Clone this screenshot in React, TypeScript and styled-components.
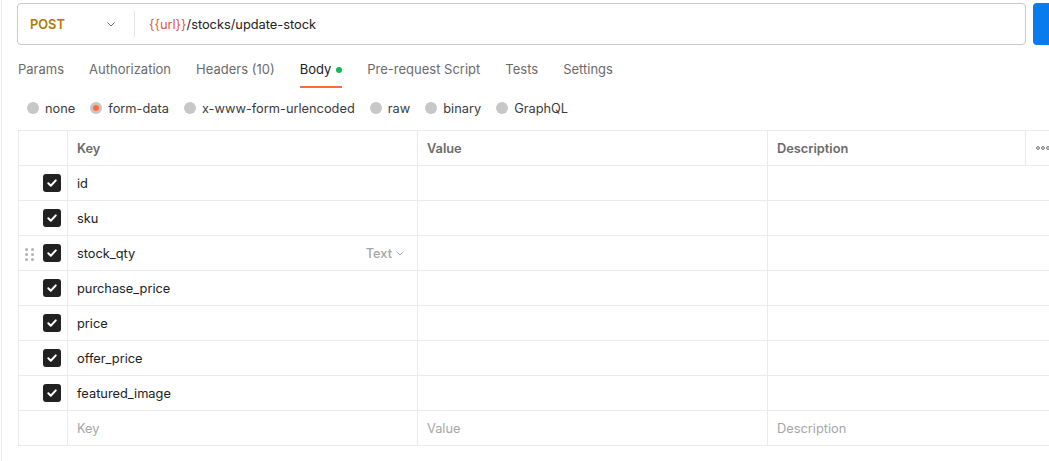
import styled, { createGlobalStyle } from 'styled-components';

const GlobalStyle = createGlobalStyle`
  html, body {
    margin: 0;
    padding: 0;
    background: #fff;
    overflow: hidden;
  }
  body {
    font-family: Inter, "Noto Sans", "Liberation Sans", sans-serif;
    font-size: 12.8px;
    color: #212121;
  }
`;

const Page = styled.div`
  height: 461px;
  margin-left: 1px;
  border-left: 1px solid #ececec;
  padding: 3px 0 0 15px;
  box-sizing: border-box;
`;

const UrlRow = styled.div`
  display: flex;
  gap: 7px;
  width: 1120px;
`;

const UrlBox = styled.div`
  display: flex;
  align-items: center;
  width: 1009px;
  height: 42px;
  box-sizing: border-box;
  border: 1px solid #c9c9c9;
  border-radius: 4px;
`;

const MethodSelect = styled.div`
  display: flex;
  align-items: center;
  justify-content: space-between;
  width: 117px;
  height: 26px;
  box-sizing: border-box;
  padding: 0 18px 0 12px;
  border-right: 1px solid #e6e6e6;
  font-weight: 600;
  color: #ad7a03;
`;

const UrlText = styled.div`
  padding-left: 14px;
  color: #212121;
`;

const Variable = styled.span`
  color: #e05743;
`;

const SendButton = styled.div`
  width: 100px;
  height: 42px;
  border-radius: 4px;
  background: #097bed;
`;

const Tabs = styled.div`
  display: flex;
  gap: 25px;
  margin-top: 7px;
  padding-left: 1px;
  font-size: 13px;
`;

const Tab = styled.div<{ $active?: boolean }>`
  display: flex;
  align-items: center;
  gap: 5px;
  height: 36px;
  box-sizing: border-box;
  border-bottom: 2px solid ${(p) => (p.$active ? '#ff6c37' : 'transparent')};
  color: ${(p) => (p.$active ? '#212121' : '#6b6b6b')};
`;

const Dot = styled.span`
  width: 6px;
  height: 6px;
  border-radius: 50%;
  background: #0cbb52;
  margin-top: 2px;
`;

const Radios = styled.div`
  display: flex;
  align-items: center;
  gap: 15px;
  height: 40px;
  padding-left: 10px;
  margin-bottom: 2px;
`;

const RadioOption = styled.label`
  display: flex;
  align-items: center;
  gap: 6px;
  color: #3b3b3b;
`;

const RadioCircle = styled.span<{ $checked?: boolean }>`
  display: inline-flex;
  align-items: center;
  justify-content: center;
  width: 12px;
  height: 12px;
  border-radius: 50%;
  background: #c7c7c7;
  &::after {
    content: '';
    width: 6px;
    height: 6px;
    border-radius: 50%;
    background: ${(p) => (p.$checked ? '#ff6c37' : 'transparent')};
  }
`;

const Table = styled.div`
  margin-left: 1px;
  width: 1080px;
  border-top: 1px solid #ebebeb;
  border-left: 1px solid #ebebeb;
`;

const Row = styled.div`
  display: grid;
  grid-template-columns: 49px 350px 350px 258px 72px;
  height: 35px;
`;

const Cell = styled.div<{ $head?: boolean; $muted?: boolean; $wide?: boolean }>`
  display: flex;
  align-items: center;
  justify-content: space-between;
  padding: 0 12px 0 9px;
  border-right: ${(p) => (p.$wide ? 'none' : '1px solid #ebebeb')};
  border-bottom: 1px solid #ebebeb;
  grid-column: ${(p) => (p.$wide ? 'span 2' : 'auto')};
  font-weight: ${(p) => (p.$head ? 600 : 400)};
  color: ${(p) => (p.$head ? '#6b6b6b' : p.$muted ? '#a6a6a6' : '#212121')};
`;

const CheckCell = styled.div`
  position: relative;
  display: flex;
  align-items: center;
  justify-content: flex-end;
  padding-right: 6px;
  border-right: 1px solid #ebebeb;
  border-bottom: 1px solid #ebebeb;
`;

const Checkbox = styled.span`
  display: flex;
  align-items: center;
  justify-content: center;
  width: 18px;
  height: 18px;
  border-radius: 3px;
  background: #212121;
`;

const Handle = styled.span`
  position: absolute;
  left: 6px;
  top: 12px;
  display: grid;
  grid-template-columns: 3px 3px;
  gap: 2px 3px;
  span {
    width: 3px;
    height: 3px;
    border-radius: 50%;
    background: #b3b3b3;
  }
`;

const TypeSelect = styled.span`
  display: flex;
  align-items: center;
  gap: 3px;
  font-weight: 500;
  color: #a6a6a6;
`;

const MoreCell = styled.div`
  display: flex;
  align-items: center;
  padding-left: 10px;
  border-bottom: 1px solid #ebebeb;
`;

const Chevron = ({ color = '#6b6b6b', size = 10 }: { color?: string; size?: number }) => (
  <svg width={size} height={size} viewBox="0 0 10 10">
    <polyline points="1.5,3.5 5,7 8.5,3.5" fill="none" stroke={color} strokeWidth="1" />
  </svg>
);

const Check = () => (
  <svg width="12" height="12" viewBox="0 0 12 12">
    <polyline points="2.3,6.3 4.8,8.8 9.8,3.4" fill="none" stroke="#fff" strokeWidth="2" strokeLinecap="round" strokeLinejoin="round" />
  </svg>
);

const rows = ['id', 'sku', 'stock_qty', 'purchase_price', 'price', 'offer_price', 'featured_image'];
const radios = ['none', 'form-data', 'x-www-form-urlencoded', 'raw', 'binary', 'GraphQL'];

const App = () => (
  <>
    <GlobalStyle />
    <Page>
      <UrlRow>
        <UrlBox>
          <MethodSelect>
            POST
            <Chevron />
          </MethodSelect>
          <UrlText>
            <Variable>{'{{url}}'}</Variable>/stocks/update-stock
          </UrlText>
        </UrlBox>
        <SendButton />
      </UrlRow>

      <Tabs>
        <Tab>Params</Tab>
        <Tab>Authorization</Tab>
        <Tab>Headers (10)</Tab>
        <Tab $active>
          Body <Dot />
        </Tab>
        <Tab>Pre-request Script</Tab>
        <Tab>Tests</Tab>
        <Tab>Settings</Tab>
      </Tabs>

      <Radios>
        {radios.map((r) => (
          <RadioOption key={r}>
            <RadioCircle $checked={r === 'form-data'} />
            {r}
          </RadioOption>
        ))}
      </Radios>

      <Table>
        <Row>
          <CheckCell />
          <Cell $head>Key</Cell>
          <Cell $head>Value</Cell>
          <Cell $head>Description</Cell>
          <MoreCell>
            <svg width="16" height="4" viewBox="0 0 16 4">
              {[2, 7, 12].map((cx) => (
                <circle key={cx} cx={cx} cy="2" r="1.4" fill="none" stroke="#6b6b6b" strokeWidth="1" />
              ))}
            </svg>
          </MoreCell>
        </Row>
        {rows.map((key) => (
          <Row key={key}>
            <CheckCell>
              {key === 'stock_qty' && (
                <Handle>
                  {Array.from({ length: 6 }).map((_, i) => (
                    <span key={i} />
                  ))}
                </Handle>
              )}
              <Checkbox>
                <Check />
              </Checkbox>
            </CheckCell>
            <Cell>
              {key}
              {key === 'stock_qty' && (
                <TypeSelect>
                  Text
                  <Chevron color="#a6a6a6" />
                </TypeSelect>
              )}
            </Cell>
            <Cell />
            <Cell $wide />
          </Row>
        ))}
        <Row>
          <CheckCell />
          <Cell $muted>Key</Cell>
          <Cell $muted>Value</Cell>
          <Cell $muted $wide>Description</Cell>
        </Row>
      </Table>
    </Page>
  </>
);

export default App;
